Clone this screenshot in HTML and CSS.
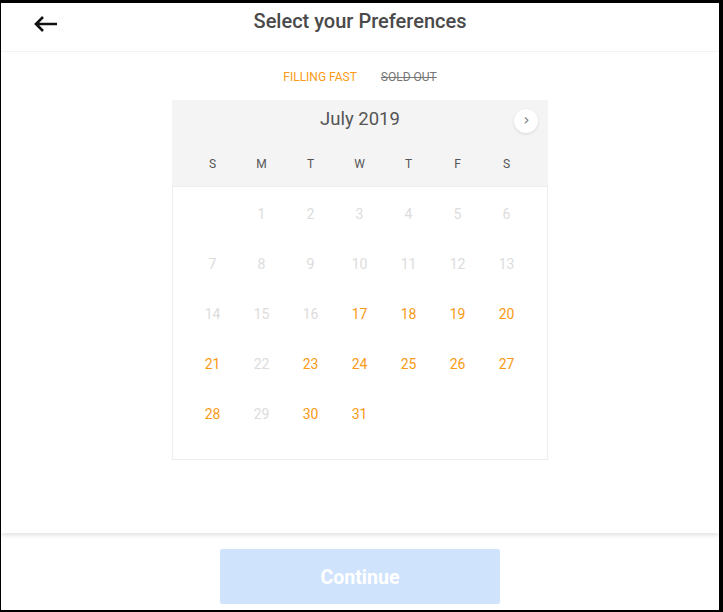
FILE: index.html
```html
<!DOCTYPE html>
<html lang="en">
<head>
<meta charset="utf-8">
<title>Select your Preferences</title>
<link rel="stylesheet" href="styles.css">
</head>
<body>
<div class="frame">
  <div class="card">
    <header class="topbar">
      <button class="back" aria-label="Back">
        <svg width="24" height="16" viewBox="0 0 24 16"><path d="M23 8H2M9 1L2 8l7 7" fill="none" stroke="#111" stroke-width="2.6" stroke-linecap="butt" stroke-linejoin="miter"/></svg>
      </button>
      <h1 class="title">Select your Preferences</h1>
      <span class="spacer"></span>
    </header>
    <div class="legend">
      <span class="fast">FILLING FAST</span>
      <span class="sold">SOLD OUT</span>
    </div>
    <div class="calendar">
      <div class="cal-head">
        <div class="month-row">
          <span></span>
          <span class="month">July 2019</span>
          <span class="nav"><button class="next" aria-label="Next month">›</button></span>
        </div>
        <div class="weekdays">
          <span>S</span><span>M</span><span>T</span><span>W</span><span>T</span><span>F</span><span>S</span>
        </div>
      </div>
      <div class="days">
        <span></span>
        <span class="off">1</span><span class="off">2</span><span class="off">3</span><span class="off">4</span><span class="off">5</span><span class="off">6</span>
        <span class="off">7</span><span class="off">8</span><span class="off">9</span><span class="off">10</span><span class="off">11</span><span class="off">12</span><span class="off">13</span>
        <span class="off">14</span><span class="off">15</span><span class="off">16</span><span class="on">17</span><span class="on">18</span><span class="on">19</span><span class="on">20</span>
        <span class="on">21</span><span class="off">22</span><span class="on">23</span><span class="on">24</span><span class="on">25</span><span class="on">26</span><span class="on">27</span>
        <span class="on">28</span><span class="off">29</span><span class="on">30</span><span class="on">31</span>
      </div>
    </div>
  </div>
  <div class="footer">
    <button class="continue">Continue</button>
  </div>
</div>
</body>
</html>
```
FILE: styles.css
```css
* { box-sizing: border-box; }
html, body { margin: 0; padding: 0; }
body {
  background: #000;
  font-family: Roboto, "Liberation Sans", Arial, sans-serif;
  width: 723px;
  height: 612px;
  overflow: hidden;
}
.frame {
  margin: 3px 4px 0 1px;
  height: 607px;
  background: #fff;
  display: flex;
  flex-direction: column;
}
.card {
  height: 530px;
  background: #fff;
  box-shadow: 0 2px 5px rgba(0,0,0,0.13);
  position: relative;
  z-index: 1;
}
.topbar {
  height: 49px;
  border-bottom: 1px solid #f2f2f2;
  display: grid;
  grid-template-columns: 1fr auto 1fr;
  align-items: start;
}
.back {
  justify-self: start;
  margin: 13px 0 0 33px;
  padding: 0;
  border: 0;
  background: none;
  width: 24px;
  height: 16px;
  display: flex;
}
.title {
  margin: 0;
  font-size: 20px;
  font-weight: 500;
  color: #4a4a4a;
  line-height: 36px;
}
.legend {
  display: flex;
  justify-content: center;
  gap: 24px;
  font-size: 12px;
  line-height: 16px;
  margin-top: 17px;
}
.fast { color: #fb9a14; }
.sold { color: #777; text-decoration: line-through; }
.calendar {
  width: 376px;
  margin: 15px auto 0;
  border: 1px solid #eee;
  border-top: 0;
}
.cal-head {
  background: #f4f4f4;
  margin: 0 -1px;
  padding-top: 9px;
  padding-bottom: 14px;
  border-bottom: 1px solid #eee;
}
.month-row {
  display: grid;
  grid-template-columns: 1fr auto 1fr;
  height: 24px;
  align-items: start;
}
.month {
  font-size: 18.5px;
  line-height: 20px;
  color: #555;
}
.nav {
  display: flex;
  justify-content: flex-end;
  padding-right: 10px;
}
.next {
  width: 24px;
  height: 24px;
  border-radius: 50%;
  border: 0;
  background: #fff;
  box-shadow: 0 1px 3px rgba(0,0,0,0.12);
  color: #777;
  font-size: 15px;
  line-height: 22px;
  padding: 0 0 2px 1px;
  font-family: "DejaVu Sans", sans-serif;
}
.weekdays {
  display: grid;
  grid-template-columns: repeat(7, 49px);
  padding: 0 16px;
  margin-top: 23px;
  font-size: 12px;
  line-height: 16px;
  color: #555;
  text-align: center;
}
.days {
  display: grid;
  grid-template-columns: repeat(7, 49px);
  grid-auto-rows: 50px;
  padding: 2px 15px 20px;
  font-size: 14px;
  text-align: center;
  align-items: center;
}
.off { color: #dcdcdc; }
.on { color: #fb9a14; }
.footer {
  flex: 1;
  display: flex;
  justify-content: center;
  padding-top: 16px;
}
.continue {
  width: 280px;
  height: 55px;
  border: 0;
  border-radius: 2px;
  background: #cfe3fd;
  color: #fff;
  font-family: Roboto, "Liberation Sans", Arial, sans-serif;
  font-size: 19.5px;
  font-weight: 700;
  padding-top: 2px;
}
```
